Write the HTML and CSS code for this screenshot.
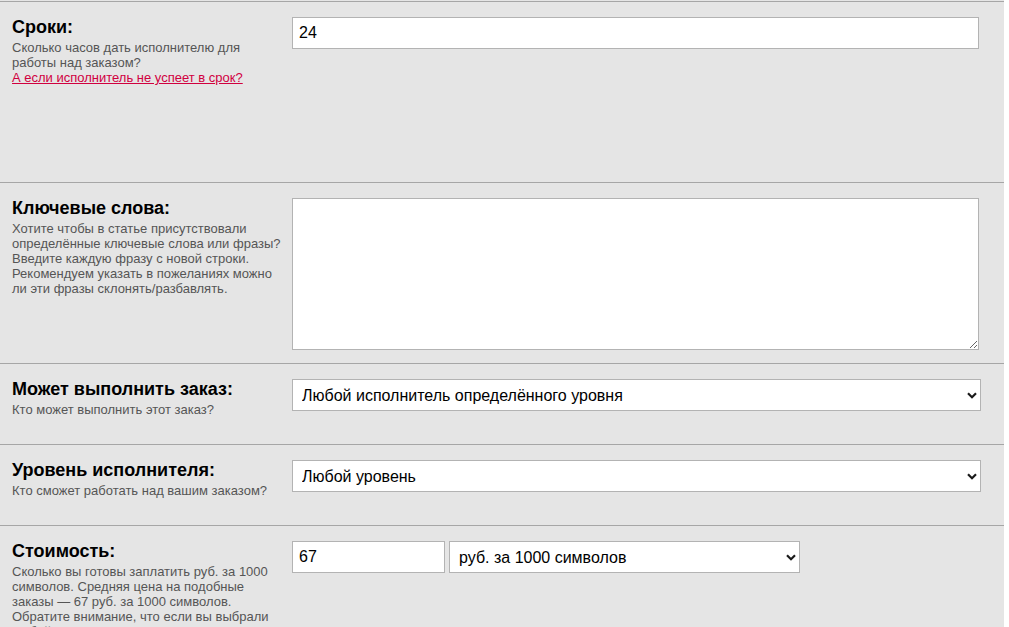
FILE: index.html
```html
<!DOCTYPE html>
<html lang="ru">
<head>
<meta charset="utf-8">
<title>Заказ</title>
<link rel="stylesheet" href="styles.css">
</head>
<body>
<div class="form">
  <div class="row row-tall">
    <div class="label-col">
      <div class="title">Сроки:</div>
      <div class="desc">Сколько часов дать исполнителю для работы над заказом?<br><a class="link" href="#">А если исполнитель не успеет в срок?</a></div>
    </div>
    <div class="field-col">
      <input class="text-input wide" type="text" value="24">
    </div>
  </div>

  <div class="row">
    <div class="label-col">
      <div class="title">Ключевые слова:</div>
      <div class="desc">Хотите чтобы в статье присутствовали определённые ключевые слова или фразы? Введите каждую фразу с новой строки. Рекомендуем указать в пожеланиях можно ли эти фразы склонять/разбавлять.</div>
    </div>
    <div class="field-col">
      <textarea class="textarea"></textarea>
    </div>
  </div>

  <div class="row">
    <div class="label-col">
      <div class="title">Может выполнить заказ:</div>
      <div class="desc">Кто может выполнить этот заказ?</div>
    </div>
    <div class="field-col">
      <div class="select-wrap full">
        <select class="select"><option>Любой исполнитель определённого уровня</option></select>
        <svg class="chev" width="10" height="7" viewBox="0 0 10 7"><path d="M1 1.2 L5 5.2 L9 1.2" fill="none" stroke="#1a1a1a" stroke-width="2.2"/></svg>
      </div>
    </div>
  </div>

  <div class="row">
    <div class="label-col">
      <div class="title">Уровень исполнителя:</div>
      <div class="desc">Кто сможет работать над вашим заказом?</div>
    </div>
    <div class="field-col">
      <div class="select-wrap full">
        <select class="select"><option>Любой уровень</option></select>
        <svg class="chev" width="10" height="7" viewBox="0 0 10 7"><path d="M1 1.2 L5 5.2 L9 1.2" fill="none" stroke="#1a1a1a" stroke-width="2.2"/></svg>
      </div>
    </div>
  </div>

  <div class="row">
    <div class="label-col">
      <div class="title">Стоимость:</div>
      <div class="desc">Сколько вы готовы заплатить руб. за 1000 символов. Средняя цена на подобные заказы — 67 руб. за 1000 символов. Обратите внимание, что если вы выбрали любой уровень исполнителя, цена может быть выше.</div>
    </div>
    <div class="field-col cost">
      <input class="text-input price" type="text" value="67">
      <div class="select-wrap unit">
        <select class="select"><option>руб. за 1000 символов</option></select>
        <svg class="chev" width="10" height="7" viewBox="0 0 10 7"><path d="M1 1.2 L5 5.2 L9 1.2" fill="none" stroke="#1a1a1a" stroke-width="2.2"/></svg>
      </div>
    </div>
  </div>
</div>
</body>
</html>
```

FILE: styles.css
```css
html, body {
  margin: 0;
  padding: 0;
  background: #ffffff;
}

body {
  font-family: "Liberation Sans", Arial, sans-serif;
}

.form {
  width: 1004px;
  background: #e5e5e5;
  padding-top: 1px;
}

.row {
  display: flex;
  align-items: flex-start;
  box-sizing: border-box;
  min-height: 81px;
  padding: 15px 0 13px;
  border-top: 1px solid #a6a6a6;
}

.row-tall {
  min-height: 181px;
}

.label-col {
  width: 292px;
  flex: none;
  box-sizing: border-box;
  padding: 0 8px 0 12px;
}

.title {
  font-size: 18px;
  font-weight: bold;
  line-height: 20px;
  color: #000;
  margin-bottom: 3px;
}

.desc {
  font-size: 13px;
  line-height: 15px;
  color: #555555;
}

.link {
  color: #d1003f;
  text-decoration: underline;
}

.field-col {
  flex: none;
}

.field-col.cost {
  display: flex;
  gap: 4px;
}

.text-input {
  box-sizing: border-box;
  height: 32px;
  border: 1px solid #b3b3b3;
  background: #fff;
  padding: 0 6px;
  margin: 0;
  font-family: "Liberation Sans", Arial, sans-serif;
  font-size: 16px;
  color: #000;
  outline: none;
  display: block;
}

.text-input.wide {
  width: 687px;
}

.text-input.price {
  width: 153px;
}

.textarea {
  display: block;
  box-sizing: border-box;
  width: 687px;
  height: 152px;
  margin: 0;
  border: 1px solid #b3b3b3;
  background: #fff;
  padding: 4px 6px;
  font-family: "Liberation Sans", Arial, sans-serif;
  font-size: 16px;
  outline: none;
}

.select-wrap {
  position: relative;
}

.select-wrap.full {
  width: 689px;
}

.select-wrap.unit {
  width: 351px;
}

.select {
  display: block;
  width: 100%;
  box-sizing: border-box;
  height: 32px;
  margin: 0;
  border: 1px solid #b3b3b3;
  border-radius: 0;
  background: #fff;
  padding: 0 24px 0 9px;
  font-family: "Liberation Sans", Arial, sans-serif;
  font-size: 16px;
  color: #000;
  appearance: none;
  -webkit-appearance: none;
  outline: none;
}

.chev {
  position: absolute;
  right: 4px;
  top: 13px;
  pointer-events: none;
}
```
